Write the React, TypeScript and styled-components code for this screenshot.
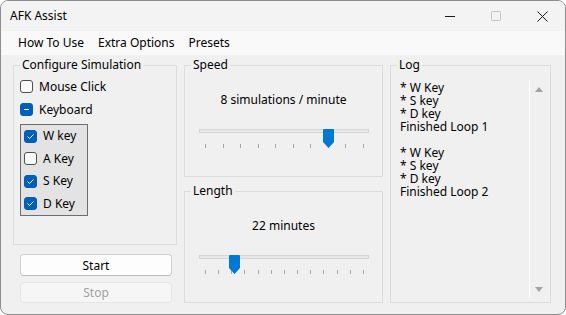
import React from "react";
import styled, { createGlobalStyle } from "styled-components";

type CheckState = "on" | "off" | "mixed";

const speed = { value: 8, min: 1, max: 10 };
const length = { value: 22, min: 0, max: 120, step: 10 };

const logLines = [
  "* W Key",
  "* S key",
  "* D key",
  "Finished Loop 1",
  "",
  "* W Key",
  "* S key",
  "* D key",
  "Finished Loop 2",
];

const keys: { label: string; state: CheckState }[] = [
  { label: "W key", state: "on" },
  { label: "A Key", state: "off" },
  { label: "S Key", state: "on" },
  { label: "D Key", state: "on" },
];

const GlobalStyle = createGlobalStyle`
  html, body {
    margin: 0;
    padding: 0;
    background: #ffffff;
  }
  body {
    font-family: "Segoe UI", "Noto Sans", "Liberation Sans", sans-serif;
    font-size: 12px;
    color: #000000;
  }
`;

const CheckBox = ({ state }: { state: CheckState }) => (
  <Box $state={state}>
    {state === "on" && (
      <svg width="11" height="11" viewBox="0 0 11 11">
        <polyline
          points="2.5,5.5 4.5,7.5 8.5,3.5"
          fill="none"
          stroke="#ffffff"
          strokeWidth="1"
        />
      </svg>
    )}
    {state === "mixed" && (
      <svg width="11" height="11" viewBox="0 0 11 11">
        <line x1="3" y1="5.5" x2="8" y2="5.5" stroke="#ffffff" strokeWidth="1" />
      </svg>
    )}
  </Box>
);

const Slider = ({ frac, ticks }: { frac: number; ticks: number }) => (
  <SliderWrap>
    <Track />
    <Ticks>
      {Array.from({ length: ticks }).map((_, i) => (
        <Tick key={i} />
      ))}
    </Ticks>
    <Thumb style={{ left: 1 + frac * 158 }} width="11" height="19" viewBox="0 0 11 19">
      <path d="M1 0 H10 Q11 0 11 1 V13 L5.5 19 L0 13 V1 Q0 0 1 0 Z" fill="#0078d4" />
    </Thumb>
  </SliderWrap>
);

const App = () => {
  return (
    <>
      <GlobalStyle />
      <Window>
        <TitleBar>
          <Title>AFK Assist</Title>
          <Controls>
            <Control>
              <svg width="10" height="10" viewBox="0 0 10 10">
                <line x1="0" y1="5.5" x2="10" y2="5.5" stroke="#1a1a1a" strokeWidth="1" />
              </svg>
            </Control>
            <Control>
              <svg width="10" height="10" viewBox="0 0 10 10">
                <rect x="0.5" y="0.5" width="9" height="9" rx="1" fill="none" stroke="#c4c4c4" strokeWidth="1" />
              </svg>
            </Control>
            <Control>
              <svg width="11" height="11" viewBox="0 0 11 11">
                <path d="M0.5 0.5 L10.5 10.5 M10.5 0.5 L0.5 10.5" stroke="#1a1a1a" strokeWidth="1" />
              </svg>
            </Control>
          </Controls>
        </TitleBar>
        <MenuBar>
          <MenuItem>How To Use</MenuItem>
          <MenuItem>Extra Options</MenuItem>
          <MenuItem>Presets</MenuItem>
        </MenuBar>
        <Client>
          <Column>
            <Group $h={188}>
              <Legend>Configure Simulation</Legend>
              <OptionList>
                <CheckRow>
                  <CheckBox state="off" />
                  Mouse Click
                </CheckRow>
                <CheckRow>
                  <CheckBox state="mixed" />
                  Keyboard
                </CheckRow>
              </OptionList>
              <KeyPanel>
                {keys.map((k) => (
                  <CheckRow key={k.label}>
                    <CheckBox state={k.state} />
                    {k.label}
                  </CheckRow>
                ))}
              </KeyPanel>
            </Group>
            <Button>Start</Button>
            <Button disabled>Stop</Button>
          </Column>
          <Column>
            <Group $h={120}>
              <Legend>Speed</Legend>
              <Readout>{speed.value} simulations / minute</Readout>
              <Slider
                frac={(speed.value - speed.min) / (speed.max - speed.min)}
                ticks={speed.max - speed.min + 1}
              />
            </Group>
            <Group $h={120} $gap={6}>
              <Legend>Length</Legend>
              <Readout>{length.value} minutes</Readout>
              <Slider
                frac={(length.value - length.min) / (length.max - length.min)}
                ticks={(length.max - length.min) / length.step + 1}
              />
            </Group>
          </Column>
          <Column>
            <Group $h={246}>
              <Legend>Log</Legend>
              <LogBox>
                <LogText>{logLines.join("\n")}</LogText>
                <ScrollBar>
                  <svg width="8" height="5" viewBox="0 0 8 5">
                    <polygon points="4,0 8,5 0,5" fill="#a3a3a3" />
                  </svg>
                  <svg width="8" height="5" viewBox="0 0 8 5">
                    <polygon points="0,0 8,0 4,5" fill="#a3a3a3" />
                  </svg>
                </ScrollBar>
              </LogBox>
            </Group>
          </Column>
        </Client>
      </Window>
    </>
  );
};

const Window = styled.div`
  width: 566px;
  height: 315px;
  box-sizing: border-box;
  border: 1px solid #8e8e8e;
  border-radius: 8px;
  overflow: hidden;
  background: #f0f0f0;
  display: flex;
  flex-direction: column;
`;

const TitleBar = styled.div`
  height: 30px;
  flex: none;
  display: flex;
  align-items: center;
  background: #f3f3f3;
  padding-left: 9px;
`;

const Title = styled.div`
  flex: 1;
  font-size: 12px;
  line-height: 16px;
`;

const Controls = styled.div`
  display: flex;
  height: 100%;
`;

const Control = styled.div`
  width: 46px;
  height: 100%;
  display: flex;
  align-items: center;
  justify-content: center;
`;

const MenuBar = styled.div`
  height: 24px;
  flex: none;
  display: flex;
  align-items: center;
  background: #f9f9f9;
  padding-left: 10px;
`;

const MenuItem = styled.div`
  padding: 0 7px;
  line-height: 24px;
`;

const Client = styled.div`
  flex: 1;
  display: grid;
  grid-template-columns: 164px 199px 161px;
  column-gap: 7px;
  align-items: start;
  padding: 2px 0 0 12px;
`;

const Column = styled.div`
  display: flex;
  flex-direction: column;
`;

const Group = styled.fieldset<{ $h: number; $gap?: number }>`
  margin: ${(p) => p.$gap ?? 0}px 0 0 0;
  padding: 0;
  min-width: 0;
  height: ${(p) => p.$h}px;
  box-sizing: border-box;
  border: 1px solid #dcdcdc;
  position: relative;
`;

const Legend = styled.legend`
  margin-left: 6px;
  padding: 0 2px;
  font-size: 12px;
  line-height: 16px;
`;

const OptionList = styled.div`
  display: flex;
  flex-direction: column;
  padding: 2px 0 0 6px;
`;

const CheckRow = styled.label`
  height: 23px;
  display: flex;
  align-items: center;
  gap: 6px;
  line-height: 16px;
`;

const Box = styled.span<{ $state: CheckState }>`
  width: 13px;
  height: 13px;
  box-sizing: border-box;
  border-radius: 3px;
  border: 1px solid ${(p) => (p.$state === "off" ? "#4f4f4f" : "#005fb8")};
  background: ${(p) => (p.$state === "off" ? "#fbfbfb" : "#005fb8")};
  display: flex;
  align-items: center;
  justify-content: center;
  flex: none;
`;

const KeyPanel = styled.div`
  margin: 3px 0 0 6px;
  width: 68px;
  height: 92px;
  box-sizing: border-box;
  border: 1px solid #6e6e6e;
  background: #e3e3e3;
  padding: 0 0 0 3px;
  display: flex;
  flex-direction: column;
`;

const Button = styled.button`
  margin: 9px 0 0 7px;
  width: 152px;
  height: 22px;
  box-sizing: border-box;
  border: 1px solid #d0d0d0;
  border-bottom-color: #bcbcbc;
  border-radius: 4px;
  background: #fdfdfd;
  font-family: inherit;
  font-size: 12px;
  color: #000000;
  padding: 0;

  &:disabled {
    margin-top: 6px;
    height: 21px;
    border-color: #e6e6e6;
    background: #f6f6f6;
    color: #a2a2a2;
  }
`;

const Readout = styled.div`
  margin-top: 19px;
  text-align: center;
  line-height: 16px;
`;

const SliderWrap = styled.div`
  position: relative;
  margin: 21px 0 0 14px;
  width: 170px;
  height: 25px;
`;

const Track = styled.div`
  margin-top: 6px;
  height: 4px;
  box-sizing: border-box;
  border: 1px solid #d6d6d6;
  background: #e7e7e7;
`;

const Ticks = styled.div`
  margin-top: 11px;
  padding: 0 5px 0 6px;
  display: flex;
  justify-content: space-between;
`;

const Tick = styled.span`
  width: 1px;
  height: 4px;
  background: #a6a6a6;
`;

const Thumb = styled.svg`
  position: absolute;
  top: 0;
  display: block;
`;

const LogBox = styled.div`
  margin: 7px 0 0 5px;
  width: 151px;
  height: 217px;
  display: flex;
`;

const LogText = styled.div`
  width: 133px;
  box-sizing: border-box;
  padding: 1px 4px;
  white-space: pre-line;
  line-height: 13px;
  font-size: 12px;
`;

const ScrollBar = styled.div`
  width: 18px;
  box-sizing: border-box;
  border-left: 1px solid #ffffff;
  display: flex;
  flex-direction: column;
  align-items: center;
  justify-content: space-between;
  padding: 7px 0 5px;
`;

export default App;
